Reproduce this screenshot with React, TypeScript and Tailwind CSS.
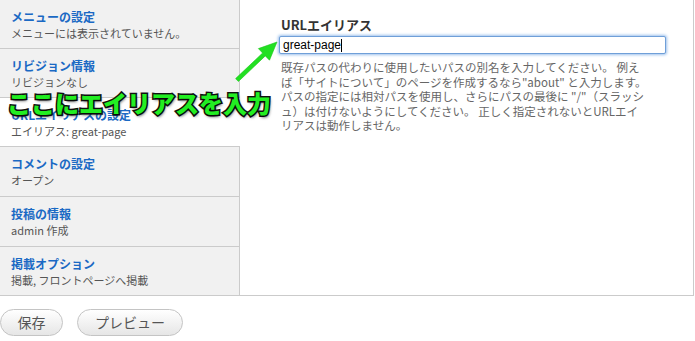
import React from "react";

const FONT = { fontFamily: '"Noto Sans CJK JP", "Noto Sans", sans-serif' };

type Item = { title: string; sub: string; h: string; active?: boolean; last?: boolean };

const items: Item[] = [
  { title: "メニューの設定", sub: "メニューには表示されていません。", h: "h-[49px]" },
  { title: "リビジョン情報", sub: "リビジョンなし", h: "h-[49px]" },
  { title: "URLエイリアスの設定", sub: "エイリアス: great-page", h: "h-[49px]", active: true },
  { title: "コメントの設定", sub: "オープン", h: "h-[50px]" },
  { title: "投稿の情報", sub: "admin 作成", h: "h-[50px]" },
  { title: "掲載オプション", sub: "掲載, フロントページへ掲載", h: "h-[48px]", last: true },
];

function SideItem({ it }: { it: Item }) {
  const base = `${it.h} pl-[11px] pt-[9px] flex flex-col`;
  const bg = it.active
    ? "bg-white"
    : "bg-[#f1f1f1] border-r border-[#cbcbcb]";
  const bb = it.last ? "" : "border-b border-b-[#cbcbcb]";
  return (
    <div className={`${base} ${bg} ${bb}`}>
      <div className="text-[12px] leading-[16px] font-bold text-[#1a69c4] whitespace-nowrap">{it.title}</div>
      <div className="text-[11px] leading-[16px] text-[#555] whitespace-nowrap">{it.sub}</div>
    </div>
  );
}

export default function App() {
  return (
    <div className="relative w-[695px] h-[341px] bg-white overflow-hidden" style={FONT}>
      <div className="flex w-[694px] h-[296px] border-r border-b border-[#cbcbcb]">
        <div className="w-[240px] flex flex-col">
          {items.map((it, i) => (
            <SideItem key={i} it={it} />
          ))}
        </div>
        <div className="flex-1 pl-[41px] pt-[17px]">
          <div className="text-[13px] leading-[16px] font-bold text-[#333]">URLエイリアス</div>
          <div className="mt-[3px] ml-[-2px] w-[387px] h-[18px] border border-[#6f9fd8] rounded-[2px] shadow-[0_0_3px_1px_#9cc0ec] bg-white flex items-center pl-[3px]">
            <span className="text-[12px] leading-[14px] text-black" style={{ fontFamily: '"Liberation Sans", Arial, sans-serif' }}>great-page</span>
            <span className="inline-block w-px h-[13px] bg-black" />
          </div>
          <div className="mt-[6px] text-[11.5px] leading-[14.6px] text-[#666] whitespace-nowrap">
            既存パスの代わりに使用したいパスの別名を入力してください。 例え
            <br />
            ば「サイトについて」のページを作成するなら"about" と入力します。
            <br />
            パスの指定には相対パスを使用し、さらにパスの最後に "/"（スラッシ
            <br />
            ュ）は付けないようにしてください。 正しく指定されないとURLエイ
            <br />
            リアスは動作しません。
          </div>
        </div>
      </div>
      <div className="flex gap-[14px] mt-[13px]">
        <button className="w-[63px] h-[27px] rounded-full border border-[#c4c4c4] bg-gradient-to-b from-white to-[#e6e6e6] text-[14px] text-[#555]">
          保存
        </button>
        <button className="w-[106px] h-[27px] rounded-full border border-[#c4c4c4] bg-gradient-to-b from-white to-[#e6e6e6] text-[14px] text-[#555]">
          プレビュー
        </button>
      </div>

      <svg className="absolute left-0 top-0 pointer-events-none" width="695" height="341" viewBox="0 0 695 341">
        <polygon
          points="238.4,81.5 265.3,55.9 269.5,60.2 277,42 258.4,48.6 262.6,53 235.6,78.6"
          fill="#22e022"
          stroke="#1bc41b"
          strokeWidth="0.6"
          strokeLinejoin="round"
        />
      </svg>

      <div
        className="absolute left-[7px] top-[89px] text-[24px] leading-[28px] font-black text-[#22ee22] whitespace-nowrap tracking-[0px] [-webkit-text-stroke:3px_#111] [paint-order:stroke_fill] [text-shadow:1px_2px_3px_rgba(0,0,0,0.6)]"
      >
        ここにエイリアスを入力
      </div>
    </div>
  );
}
